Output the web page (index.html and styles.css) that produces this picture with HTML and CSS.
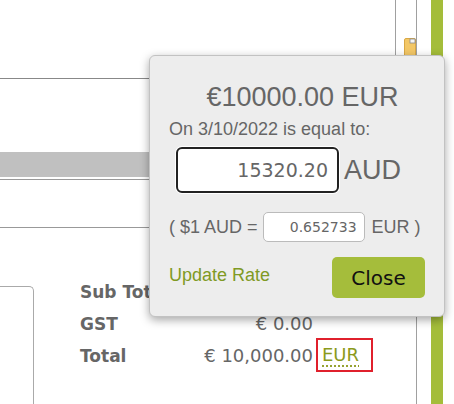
FILE: index.html
```html
<!DOCTYPE html>
<html lang="en">
<head>
  <meta charset="UTF-8">
  <title>Invoice - Currency</title>
  <link rel="stylesheet" href="styles.css">
</head>
<body>
  <div class="page">
    <div class="main">
      <div class="top">
        <div class="top-left"></div>
        <div class="tools">
          <svg class="doc-icon" width="12" height="20" viewBox="0 0 12 20">
            <rect x="0.5" y="0.5" width="11" height="19" rx="1.5" fill="#f3c766" stroke="#d9a845"/>
            <rect x="6" y="1" width="5" height="4" fill="#f4f4f4" stroke="#8a8a8a" stroke-width="0.8"/>
          </svg>
        </div>
      </div>
      <div class="band"></div>
      <div class="section"></div>
      <div class="bottom">
        <div class="side-box"></div>
        <div class="totals">
          <div class="label">Sub Total</div>
          <div class="value">€ 10,000.00</div>
          <div></div>
          <div class="label">GST</div>
          <div class="value">€ 0.00</div>
          <div></div>
          <div class="label">Total</div>
          <div class="value">€ 10,000.00</div>
          <div><span class="currency">EUR</span></div>
        </div>
      </div>
    </div>
    <div class="gap"></div>
    <div class="sidebar"></div>
  </div>

  <div class="popup">
    <div class="amount">€10000.00 EUR</div>
    <div class="equal">On 3/10/2022 is equal to:</div>
    <div class="convert-row">
      <input class="converted" type="text" value="15320.20">
      <span class="code">AUD</span>
    </div>
    <div class="rate-row">
      <span>( $1 AUD =</span>
      <input class="rate" type="text" value="0.652733">
      <span>EUR )</span>
    </div>
    <div class="actions">
      <a class="update">Update Rate</a>
      <button class="close">Close</button>
    </div>
  </div>
</body>
</html>
```

FILE: styles.css
```css
html, body {
  margin: 0;
  width: 454px;
  height: 404px;
  overflow: hidden;
  background: #fff;
}
body {
  font-family: "Liberation Sans", Arial, sans-serif;
  position: relative;
}
.page {
  display: flex;
  height: 404px;
}
.main {
  width: 416px;
  border-right: 1px solid #a0a0a0;
  display: flex;
  flex-direction: column;
}
.top {
  height: 78px;
  border-bottom: 1px solid #888;
  display: flex;
}
.top-left {
  flex: 1;
}
.tools {
  width: 20px;
  border-left: 1px solid #a0a0a0;
}
.doc-icon {
  display: block;
  margin: 38px 0 0 8px;
}
.band {
  margin-top: 73px;
  height: 25px;
  background: #c0c0c0;
}
.section {
  margin-top: 2px;
  height: 47px;
  border-top: 1px solid #999;
  border-bottom: 1px solid #999;
}
.bottom {
  flex: 1;
  display: flex;
  padding-top: 48px;
}
.side-box {
  width: 33px;
  margin-top: 10px;
  border-top: 1px solid #aaa;
  border-right: 1px solid #aaa;
  border-top-right-radius: 5px;
}
.totals {
  margin-left: 46px;
  display: grid;
  grid-template-columns: 100px 133px auto;
  grid-auto-rows: 32px;
  align-content: start;
  font-family: "DejaVu Sans", Verdana, sans-serif;
  color: #666;
  line-height: 32px;
}
.label {
  font-weight: bold;
  font-size: 17px;
}
.value {
  font-size: 18px;
  text-align: right;
  white-space: nowrap;
}
.currency {
  display: inline-block;
  margin: -2px 0 0 3px;
  padding: 0 12px 0 4px;
  line-height: 30px;
  font-size: 18px;
  color: #8b9a1c;
  border: 2px solid #e0202c;
  text-decoration: underline dotted #8b9a1c;
  text-underline-offset: 5px;
}
.gap {
  width: 14px;
}
.sidebar {
  width: 12px;
  background: #a4bd3a;
}

.popup {
  position: absolute;
  left: 149px;
  top: 55px;
  width: 256px;
  height: 217px;
  padding: 25px 19px 18px 19px;
  background: #ededed;
  border: 1px solid #c2c2c2;
  border-radius: 6px;
  box-shadow: 0 3px 10px rgba(0, 0, 0, 0.35);
  color: #666;
}
.amount {
  font-size: 27px;
  line-height: 32px;
  text-align: center;
  padding-left: 11px;
  margin-bottom: 5px;
}
.equal {
  font-size: 18px;
  line-height: 22px;
}
.convert-row {
  display: flex;
  align-items: center;
  margin-top: 7px;
}
.converted {
  box-sizing: border-box;
  width: 163px;
  height: 46px;
  margin: 0 0 0 7px;
  padding: 0 9px 0 0;
  border: 2px solid #222;
  border-radius: 6px;
  box-shadow: 0 0 0 1px #fff;
  background: #fff;
  text-align: right;
  font-family: "DejaVu Sans", Verdana, sans-serif;
  font-size: 19px;
  color: #666;
  outline: none;
}
.code {
  font-size: 27px;
  line-height: 32px;
  margin-left: 5px;
}
.rate-row {
  display: flex;
  align-items: center;
  margin-top: 19px;
  font-size: 18px;
  line-height: 22px;
}
.rate {
  box-sizing: border-box;
  width: 102px;
  height: 30px;
  margin: 0 7px 0 5px;
  padding: 0 7px 0 0;
  border: 1px solid #bbb;
  border-radius: 5px;
  background: #fff;
  text-align: right;
  font-family: "DejaVu Sans", Verdana, sans-serif;
  font-size: 14px;
  color: #666;
}
.actions {
  display: flex;
  justify-content: space-between;
  align-items: center;
  margin-top: 15px;
}
.update {
  font-size: 18px;
  color: #7f9a24;
  margin-top: -4px;
}
.close {
  width: 93px;
  height: 41px;
  border: none;
  border-radius: 5px;
  background: #a5bd3b;
  font-family: "DejaVu Sans", Verdana, sans-serif;
  font-size: 20px;
  color: #111;
  padding: 0;
}
```
